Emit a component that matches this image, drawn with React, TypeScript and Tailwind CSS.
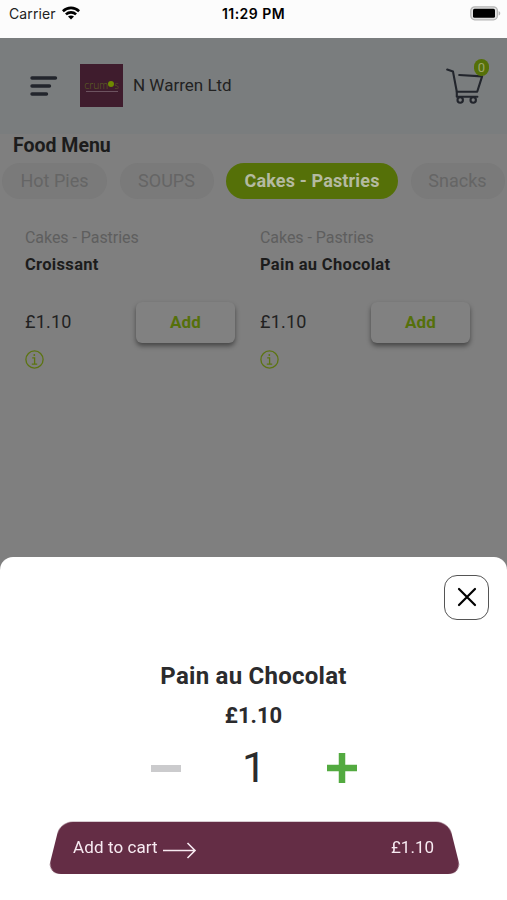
import clsx from "clsx";

const categories = [
  { name: "Hot Pies", width: "w-[105px]" },
  { name: "SOUPS", width: "w-[94px]" },
  { name: "Cakes - Pastries", width: "w-[172px]", active: true },
  { name: "Snacks", width: "w-[94px]" },
];

const products = [
  { name: "Croissant", category: "Cakes - Pastries", price: "£1.10" },
  { name: "Pain au Chocolat", category: "Cakes - Pastries", price: "£1.10" },
];

function StatusBar() {
  return (
    <div className="h-[38px] bg-[#fcfcfc] flex items-start justify-between pl-[9px] pr-[6px] pt-[4px] text-black font-[Inter]">
      <div className="w-[150px] flex items-center gap-[6px] h-5 text-[14px] tracking-[0.1px] text-[#222]">
        <span className="-mt-[2px]">Carrier</span>
        <svg className="-mt-[2px]" width="18" height="14" viewBox="0 0 18 14" fill="none" stroke="#000" strokeWidth="2.6">
          <path d="M.9 5.2C5.6.8 12.4.8 17.1 5.2" />
          <path d="M3.9 8.4c2.9-2.7 7.3-2.7 10.2 0" />
          <path d="M9 13.6 6 10.6c1.7-1.5 4.3-1.5 6 0z" fill="#000" stroke="none" />
        </svg>
      </div>
      <div className="h-5 leading-5 text-[14px] font-semibold tracking-[0.45px] -ml-[3px]">11:29 PM</div>
      <div className="w-[150px] h-[18px] flex justify-end items-center">
        <svg width="31" height="15" viewBox="0 0 31 15">
          <rect x="0.8" y="0.8" width="26.6" height="13" rx="4" fill="#e2e2e2" stroke="#b5b5b5" strokeWidth="1.3" />
          <rect x="3" y="2.8" width="22" height="9" rx="1.5" fill="#000" />
          <path d="M28.6 5c2.2.8 2.2 3.8 0 4.6z" fill="#b5b5b5" />
        </svg>
      </div>
    </div>
  );
}

function Header() {
  return (
    <header className="h-24 bg-[#7a7d7e] flex items-center pl-[30px] pr-[17px]">
      <svg width="28" height="22" viewBox="0 0 28 22" stroke="#22252c" strokeWidth="3.4" strokeLinecap="round">
        <path d="M2 3h23.5M2 11h17.5M2 19h14.5" />
      </svg>
      <div className="ml-[22px] -mt-px size-[43px] bg-[#3f1c2d] flex flex-col items-center justify-center">
        <div className="flex items-center text-[11px] leading-[9px] font-light text-[#5f6622] font-[Lato]">
          crum
          <span className="size-[6px] rounded-full bg-[#6f8a00]" />s
        </div>
        <div className="mt-[2px] w-8 h-px bg-[#6d5360]" />
      </div>
      <div className="ml-[10px] text-[17px] text-[#222]">N Warren Ltd</div>
      <div className="relative ml-auto w-[44px] h-[48px]">
        <svg className="absolute left-0 top-[6px]" width="40" height="38" viewBox="0 0 40 38" fill="none" stroke="#22252c" strokeWidth="2.1" strokeLinecap="round" strokeLinejoin="round">
          <path d="M1.2 1.6 7 3.6l3.8 20.2h20.4l4.9-15.4L13.2 7" />
          <path d="M10.8 23.8v4.9h20.6" />
          <circle cx="14.2" cy="32" r="2.7" />
          <circle cx="27.2" cy="32" r="2.7" />
        </svg>
        <span className="absolute left-[28px] -top-[3px] w-[15px] h-[17px] rounded-full bg-[#557008] text-[#9da66e] text-[13px] leading-[17px] text-center">0</span>
      </div>
    </header>
  );
}

function InfoIcon() {
  return (
    <svg width="19" height="19" viewBox="0 0 19 19" fill="none" stroke="#5c7411" strokeWidth="1.3">
      <circle cx="9.5" cy="9.5" r="8.6" />
      <path d="M7.2 7.8h2.4v6M6.8 14.1h5.4" />
      <circle cx="9.3" cy="5" r="0.9" fill="#5c7411" stroke="none" />
    </svg>
  );
}

function ProductCard({ name, category, price }: { name: string; category: string; price: string }) {
  return (
    <div className="w-[211px]">
      <div className="h-5 leading-5 text-[16px] -tracking-[0.05px] text-[#5e5e5e]">{category}</div>
      <div className="mt-[7px] h-5 leading-5 text-[16.5px] tracking-[0.32px] font-bold text-[#1c1c1c]">{name}</div>
      <div className="mt-[27px] h-[41px] flex items-center justify-between">
        <span className="-mt-[3px] text-[18px] tracking-[0.2px] text-[#222]">{price}</span>
        <button className="w-[99px] h-[41px] mr-px rounded-[6px] bg-[#818181] shadow-[0_3px_5px_rgba(0,0,0,0.45)] text-[17px] tracking-[0.2px] font-bold text-[#55700b]">
          Add
        </button>
      </div>
      <div className="mt-[7px]">
        <InfoIcon />
      </div>
    </div>
  );
}

function AddToCartSheet() {
  return (
    <section className="h-[343px] bg-white rounded-t-[13px] pt-[18px] text-[#2b2b2d]">
      <div className="flex justify-end pr-[18px]">
        <button className="size-[45px] rounded-[13px] border-[1.5px] border-[#555] flex items-center justify-center">
          <svg className="-mt-px" width="20" height="20" viewBox="0 0 20 20" stroke="#000" strokeWidth="2.2" strokeLinecap="round">
            <path d="m2 2 16 16M18 2 2 18" />
          </svg>
        </button>
      </div>
      <h2 className="mt-[40px] h-8 leading-8 text-center text-[24px] tracking-[0.25px] font-bold">Pain au Chocolat</h2>
      <div className="mt-[10px] h-7 leading-7 text-center text-[22px] font-bold">£1.10</div>
      <div className="mt-[13px] h-[50px] flex items-center justify-between pl-[151px] pr-[150px]">
        <div className="w-[30px] h-[7px] bg-[#cbcbcd]" />
        <span className="text-[43px] leading-[50px] -mt-[2px]">1</span>
        <svg width="30" height="30" viewBox="0 0 30 30" stroke="#53aa40" strokeWidth="6.5">
          <path d="M0 15h30M15 0v30" />
        </svg>
      </div>
      <div className="relative mt-[27px] ml-[54px] w-[401px] h-[54px] flex items-center justify-between pt-[2px] pl-[19px] pr-[21px] text-[17px] text-[#f7eaf1]">
        <div className="absolute inset-0 rounded-[13px] bg-[#642d45] [transform:perspective(200px)_rotateX(14deg)]" />
        <div className="relative flex items-center gap-[5px] tracking-[0.1px]">
          Add to cart
          <svg className="mt-[5px]" width="34" height="17" viewBox="0 0 34 17" fill="none" stroke="#f7eaf1" strokeWidth="1.6">
            <path d="M0 8.5h32M24.5 1l7.5 7.5-7.5 7.5" />
          </svg>
        </div>
        <span className="relative">£1.10</span>
      </div>
    </section>
  );
}

export default function App() {
  return (
    <div className="w-[507px] h-[900px] overflow-hidden flex flex-col bg-[#7f7f7f] font-[Roboto,sans-serif]">
      <StatusBar />
      <Header />
      <main className="flex-1">
        <h1 className="h-[29px] pl-[13px] leading-6 text-[19.5px] font-bold text-[#1c1c1c]">Food Menu</h1>
        <div className="flex gap-[12.5px] pl-[2px]">
          {categories.map((c) => (
            <div
              key={c.name}
              className={clsx(
                "h-9 pb-[2px] shrink-0 rounded-full flex items-center justify-center text-[18px] whitespace-nowrap",
                c.width,
                c.active ? "bg-[#557008] text-[#b4baa0] tracking-[0.15px] font-bold" : "bg-[#7a7a7a] text-[#656565]"
              )}
            >
              {c.name}
            </div>
          ))}
        </div>
        <div className="mt-[29px] pl-[25px] flex gap-6">
          {products.map((p) => (
            <ProductCard key={p.name} {...p} />
          ))}
        </div>
      </main>
      <AddToCartSheet />
    </div>
  );
}
